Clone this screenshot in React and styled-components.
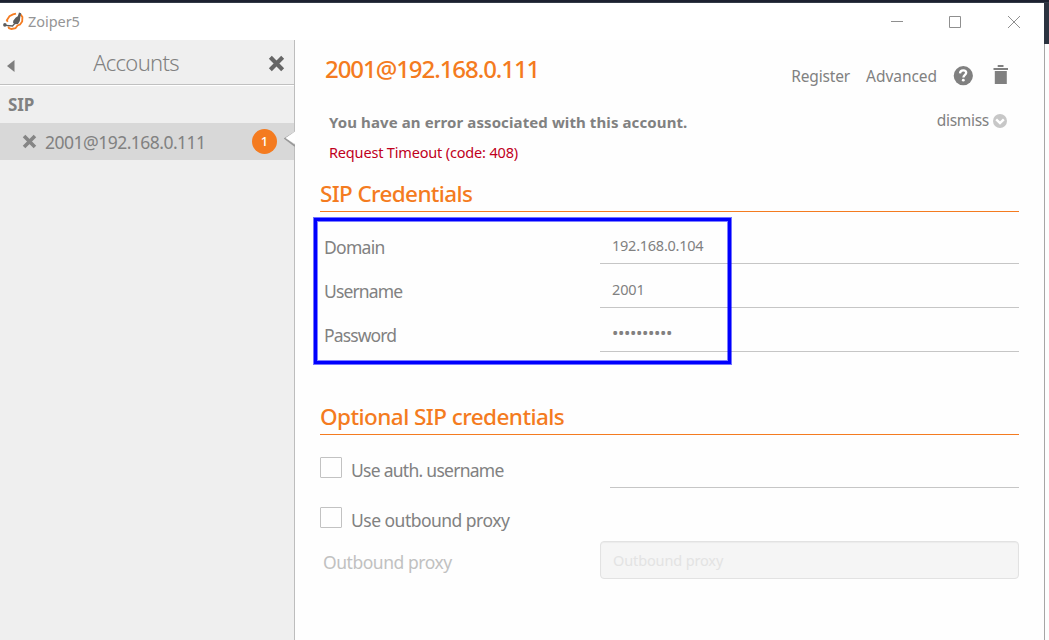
import React from 'react';
import styled, { createGlobalStyle } from 'styled-components';

const ORANGE = '#f47b20';
const GREY = '#818181';

const Global = createGlobalStyle`
  * { box-sizing: border-box; }
  body {
    margin: 0;
    overflow: hidden;
    background: #fefefe;
    font-family: "Noto Sans", "Open Sans", sans-serif;
    color: ${GREY};
  }
  svg { display: block; flex: none; }
`;

const Screen = styled.div`
  display: flex;
  flex-direction: column;
  height: 640px;
`;

const Backdrop = styled.div`
  height: 3px;
  flex: none;
  background: linear-gradient(#1c2130 2px, #323a47 2px);
`;

const Desktop = styled.div`
  display: flex;
  flex: 1;
  min-height: 0;
`;

const Window = styled.div`
  display: flex;
  flex-direction: column;
  flex: 1;
  background: #fefefe;
`;

const Edge = styled.div`
  display: flex;
  flex-direction: column;
  width: 5px;
`;

const EdgeDark = styled.div`
  height: 41px;
  background: #2b3340;
`;

const EdgeLine = styled.div`
  flex: 1;
  border-left: 1px solid #a6a6a6;
`;

const TitleBar = styled.header`
  display: flex;
  align-items: center;
  height: 37px;
  padding: 0 24px 0 3px;
  background: #fff;
`;

const Text = styled.span`
  white-space: nowrap;
  font-size: ${(p) => p.$size}px;
  font-weight: ${(p) => p.$weight || 400};
  line-height: ${(p) => p.$line}px;
  letter-spacing: ${(p) => p.$track || 0}px;
  color: ${(p) => p.$color || GREY};
`;

const AppName = styled(Text)`
  margin-left: 4px;
  flex: 1;
`;

const WindowButtons = styled.div`
  display: flex;
  gap: 47px;

  svg:nth-child(2) { margin-left: -1px; }
`;

const Body = styled.div`
  display: flex;
  flex: 1;
  min-height: 0;
`;

const Sidebar = styled.aside`
  width: 295px;
  flex: none;
  background: #efefef;
  border-right: 1px solid #bdbdbd;
`;

const SideHeader = styled.div`
  display: flex;
  align-items: flex-start;
  height: 46px;
  padding: 0 9px 0 7px;
  border-bottom: 1px solid #fff;
  box-shadow: inset 0 -1px #c0c0c0;
`;

const HeaderTitle = styled(Text)`
  flex: 1;
  padding-right: 11px;
  text-align: center;
`;

const HeaderIcon = styled.span`
  padding-top: ${(p) => p.$top}px;
`;

const GroupName = styled.div`
  display: flex;
  height: 37px;
  padding-left: 8px;
`;

const AccountRow = styled.div`
  position: relative;
  display: flex;
  align-items: center;
  height: 37px;
  padding: 0 17px 0 22px;
  background: #d8d8d8;
`;

const AccountName = styled(Text)`
  flex: 1;
  margin-left: 8px;
  padding-top: 1px;
`;

const Badge = styled.span`
  width: 25px;
  height: 25px;
  border-radius: 50%;
  background: ${ORANGE};
  color: #fff;
  font-size: 13px;
  font-weight: 500;
  line-height: 25px;
  text-align: center;
`;

const Pointer = styled.svg`
  position: absolute;
  right: -1px;
  top: 5px;
`;

const Main = styled.main`
  position: relative;
  flex: 1;
  padding: 0 25px;
`;

const AccountHeader = styled.div`
  display: flex;
  align-items: flex-start;
  height: 67px;
  padding: 0 10px 0 5px;
`;

const Actions = styled.div`
  display: flex;
  align-items: center;
  margin: 8px 0 0 auto;
`;

const Action = styled(Text)`
  margin-right: 16px;
`;

const TrashIcon = styled.svg`
  margin: 0 1px 2px 20px;
`;

const ErrorPanel = styled.section`
  display: flex;
  justify-content: space-between;
  align-items: flex-start;
  height: 60px;
  padding: 0 12px 0 9px;
`;

const ErrorText = styled.div`
  display: flex;
  flex-direction: column;
`;

const Dismiss = styled.div`
  display: flex;
  align-items: center;
  gap: 4px;

  svg { margin-top: 2px; }
`;

const Section = styled.section`
  margin-top: ${(p) => p.$gap}px;
`;

const SectionHeading = styled.h2`
  display: flex;
  margin: 0;
  height: 36px;
  border-bottom: 1px solid ${ORANGE};
`;

const Fields = styled.div`
  padding-top: 8px;
`;

const FieldRow = styled.div`
  display: flex;
  justify-content: space-between;
  height: 44px;
`;

const FieldLabel = styled(Text)`
  padding: 11px 0 0 4px;
`;

const FieldValue = styled.div`
  width: 419px;
  padding: 8px 0 0 12px;
  border-bottom: 1px solid #c6c6c6;
`;

const CheckRows = styled.div`
  padding-top: 22px;
`;

const CheckRow = styled.div`
  display: flex;
  align-items: flex-start;
  height: ${(p) => p.$height}px;
`;

const Checkbox = styled.span`
  width: 22px;
  height: 21px;
  border: 1px solid #c2c2c2;
  border-radius: 1px;
  margin-right: 9px;
`;

const Underline = styled.div`
  width: 409px;
  height: 31px;
  margin-left: auto;
  border-bottom: 1px solid #c6c6c6;
`;

const ProxyRow = styled.div`
  display: flex;
  justify-content: space-between;
  align-items: flex-start;
  padding-left: 3px;
`;

const DisabledInput = styled.div`
  width: 419px;
  height: 38px;
  padding: 0 0 0 12px;
  border: 1px solid #e2e2e2;
  border-radius: 4px;
  background: #f5f5f5;
  box-shadow: inset 0 1px 1px rgba(0, 0, 0, 0.04);
`;

/* Marker frame that lies over the credential fields */
const Highlight = styled.div`
  position: absolute;
  left: 19px;
  top: 178px;
  width: 417px;
  height: 146px;
  border: 3px solid #0000fe;
  box-shadow: 0 0 0 1px rgba(0, 0, 255, 0.55), inset 0 0 0 1px rgba(0, 0, 255, 0.5);
`;

const Cross = ({ size, color }) => (
  <svg width={size} height={size} viewBox="0 0 16 16">
    <path d="M2.2 2.2 13.8 13.8M13.8 2.2 2.2 13.8" stroke={color} strokeWidth="3.9" />
  </svg>
);

const Logo = () => (
  <svg width="21" height="19" viewBox="0 0 21 19">
    <path
      d="M4.8 9.8 3.8 8.2 6.5 4.2 10 2.4 13 1.6M17.5 2.4 19.4 5 19.2 9.5 17 12.5 14.5 13.5 12.5 16.2 8.5 17 6 16.2 5.3 14.5"
      fill="none"
      stroke={ORANGE}
      strokeWidth="1.8"
    />
    <path d="M16 .5 18.2 1.2 17.3 5 16.8 9 15 12 11.5 12.2 10 10.5 10.4 8.5 12.8 5.5 14.8 4.3Z" fill="#5c5c5c" />
    <path d="M11.5 11.8 9.5 14 3 13.4" fill="none" stroke="#5c5c5c" strokeWidth="1.3" />
    <circle cx="1.9" cy="12.9" r="1.8" fill="#5c5c5c" />
  </svg>
);

const FIELDS = [
  { label: 'Domain', track: -0.7, value: '192.168.0.104', valueTrack: -0.25 },
  { label: 'Username', track: -0.87, value: '2001', valueTrack: -0.15 },
  { label: 'Password', track: -0.88, value: '••••••••••', valueSize: 17, valueTrack: -0.4 },
];

export default function App() {
  return (
    <Screen>
      <Global />
      <Backdrop />
      <Desktop>
        <Window>
          <TitleBar>
            <Logo />
            <AppName $size={14.5} $line={37} $track={-0.05} $color="#959595">Zoiper5</AppName>
            <WindowButtons>
              <svg width="12" height="12" viewBox="0 0 12 12"><path d="M0 5.5H12" stroke="#8f8f8f" /></svg>
              <svg width="12" height="12" viewBox="0 0 12 12"><path d="M.5.5H11.5V11.5H.5Z" fill="none" stroke="#8f8f8f" /></svg>
              <svg width="12" height="12" viewBox="0 0 12 12"><path d="M0 0 12 12M12 0 0 12" stroke="#8f8f8f" /></svg>
            </WindowButtons>
          </TitleBar>
          <Body>
            <Sidebar>
              <SideHeader>
                <HeaderIcon $top={20}>
                  <svg width="8" height="12" viewBox="0 0 8 12"><path d="M0 6 7.5 0V12Z" fill="#7e7e7e" /></svg>
                </HeaderIcon>
                <HeaderTitle $size={22} $weight={300} $line={45} $track={-0.7}>Accounts</HeaderTitle>
                <HeaderIcon $top={15}><Cross size={17} color="#666" /></HeaderIcon>
              </SideHeader>
              <GroupName>
                <Text $size={17} $weight={700} $line={37} $track={-0.1}>SIP</Text>
              </GroupName>
              <AccountRow>
                <Cross size={15} color="#858585" />
                <AccountName $size={17.5} $line={37} $track={-0.52}>2001@192.168.0.111</AccountName>
                <Badge>1</Badge>
                <Pointer width="11" height="19" viewBox="0 0 11 19">
                  <path d="M11 4.5 1 10.5 11 18" fill="none" stroke="#999" strokeWidth="1.6" />
                  <path d="M11 3.5 1.5 10 11 16Z" fill="#fff" />
                </Pointer>
              </AccountRow>
            </Sidebar>
            <Main>
              <AccountHeader>
                <Text $size={24} $weight={500} $line={57} $track={-1.06} $color={ORANGE}>2001@192.168.0.111</Text>
                <Actions>
                  <Action $size={15.5} $line={56} $track={-0.15}>Register</Action>
                  <Action $size={15.5} $line={56} $track={-0.05}>Advanced</Action>
                  <svg width="20" height="20" viewBox="0 0 20 20">
                    <circle cx="10.3" cy="9.7" r="9.6" fill="#808080" />
                    <path d="M7 7.3C7.2 5.1 8.5 4.4 10.2 4.4C12 4.4 13.2 5.3 13.2 6.8C13.2 8.9 10.4 8.9 10.4 11.5" fill="none" stroke="#fff" strokeWidth="2.3" />
                    <circle cx="10.3" cy="14.2" r="1.4" fill="#fff" />
                  </svg>
                  <TrashIcon width="15" height="20" viewBox="0 0 15 20">
                    <path d="M4.7 0H10.5V2H4.7ZM.5 3H15V5H.5ZM1.8 6H13.8V19H1.8Z" fill="#808080" />
                  </TrashIcon>
                </Actions>
              </AccountHeader>
              <ErrorPanel>
                <ErrorText>
                  <Text $size={15} $weight={700} $line={30} $track={0.1}>You have an error associated with this account.</Text>
                  <Text $size={14.5} $line={30} $track={-0.17} $color="#c0001c">Request Timeout (code: 408)</Text>
                </ErrorText>
                <Dismiss>
                  <Text $size={15.5} $line={26} $track={-0.3}>dismiss</Text>
                  <svg width="14" height="14" viewBox="0 0 14 14">
                    <circle cx="7" cy="7" r="7" fill="#c7c7c7" />
                    <path d="M3.2 5.3 7 9 10.8 5.3" fill="none" stroke="#fff" strokeWidth="2.4" />
                  </svg>
                </Dismiss>
              </ErrorPanel>
              <Section $gap={9}>
                <SectionHeading>
                  <Text $size={22.5} $weight={500} $line={35} $track={-0.63} $color={ORANGE}>SIP Credentials</Text>
                </SectionHeading>
                <Fields>
                  {FIELDS.map((f) => (
                    <FieldRow key={f.label}>
                      <FieldLabel $size={17.5} $line={33} $track={f.track}>{f.label}</FieldLabel>
                      <FieldValue>
                        <Text $size={f.valueSize || 14.5} $line={34} $track={f.valueTrack}>{f.value}</Text>
                      </FieldValue>
                    </FieldRow>
                  ))}
                </Fields>
              </Section>
              <Section $gap={47}>
                <SectionHeading>
                  <Text $size={22.5} $weight={500} $line={35} $track={-0.55} $color={ORANGE}>Optional SIP credentials</Text>
                </SectionHeading>
                <CheckRows>
                  <CheckRow $height={50}>
                    <Checkbox />
                    <Text $size={17.5} $line={27} $track={-0.73}>Use auth. username</Text>
                    <Underline />
                  </CheckRow>
                  <CheckRow $height={34}>
                    <Checkbox />
                    <Text $size={17.5} $line={27} $track={-0.52}>Use outbound proxy</Text>
                  </CheckRow>
                  <ProxyRow>
                    <Text $size={17.5} $line={43} $track={-0.46} $color="#c1c1c1">Outbound proxy</Text>
                    <DisabledInput>
                      <Text $size={14.5} $line={36} $track={-0.13} $color="#e3e3e3">Outbound proxy</Text>
                    </DisabledInput>
                  </ProxyRow>
                </CheckRows>
              </Section>
              <Highlight />
            </Main>
          </Body>
        </Window>
        <Edge>
          <EdgeDark />
          <EdgeLine />
        </Edge>
      </Desktop>
    </Screen>
  );
}
